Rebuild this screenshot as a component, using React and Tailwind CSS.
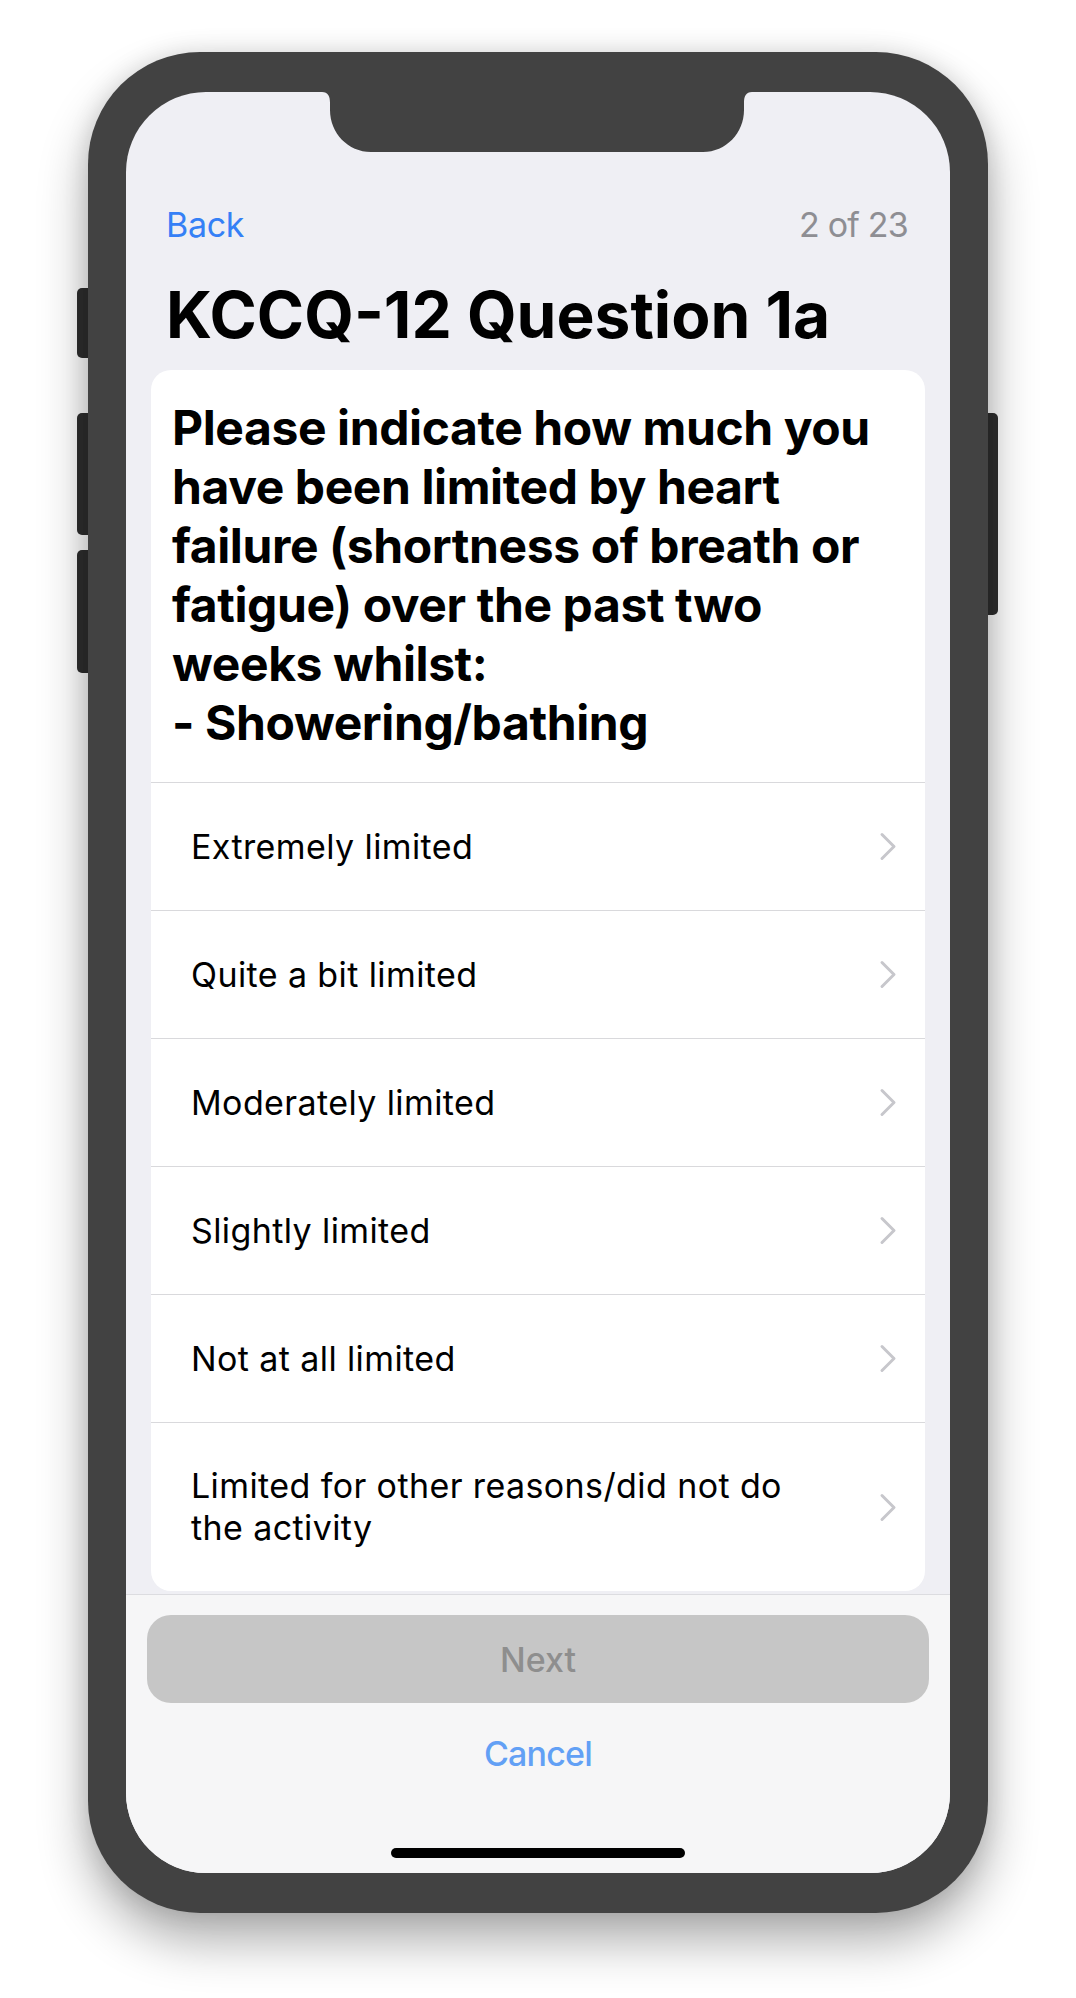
import React from "react";

const options = [
  "Extremely limited",
  "Quite a bit limited",
  "Moderately limited",
  "Slightly limited",
  "Not at all limited",
];

function Chevron() {
  return (
    <svg width="18" height="29" viewBox="0 0 18 29" className="shrink-0">
      <polyline
        points="3,2.5 15,14.5 3,26.5"
        fill="none"
        stroke="#c7c7cc"
        strokeWidth="3"
        strokeLinecap="round"
        strokeLinejoin="round"
      />
    </svg>
  );
}

function Notch() {
  return (
    <svg
      width="430"
      height="60"
      viewBox="0 0 430 60"
      className="absolute left-[196px] top-0"
    >
      <path
        d="M0 0 H430 C424 0 422 4 422 11 V18 C422 41 404 60 381 60 H49 C26 60 8 41 8 18 V11 C8 4 6 0 0 0 Z"
        fill="#424242"
      />
    </svg>
  );
}

export default function App() {
  return (
    <div
      className="w-[1076px] h-[1998px] bg-white overflow-hidden pt-[52px] pl-[88px]"
      style={{ fontFamily: "Inter, 'Liberation Sans', sans-serif" }}
    >
      <div className="relative w-[900px] h-[1861px]">
        {/* side buttons */}
        <div className="absolute left-[-11px] top-[236px] w-[14px] h-[70px] rounded-l-[5px] bg-[#2f2f2f]" />
        <div className="absolute left-[-11px] top-[361px] w-[14px] h-[122px] rounded-l-[5px] bg-[#2f2f2f]" />
        <div className="absolute left-[-11px] top-[498px] w-[14px] h-[123px] rounded-l-[5px] bg-[#2f2f2f]" />
        <div className="absolute right-[-10px] top-[361px] w-[14px] h-[202px] rounded-r-[5px] bg-[#2f2f2f]" />

        <div className="relative w-[900px] h-[1861px] rounded-[112px] bg-[#424242] pt-[40px] px-[38px] shadow-[0_28px_50px_rgba(0,0,0,0.32),0_0_24px_rgba(0,0,0,0.12)]">
          <div className="relative w-[824px] h-[1781px] rounded-[80px] overflow-hidden bg-[#efeff4] flex flex-col">
            <Notch />

            {/* nav */}
            <div className="flex justify-between items-center pl-[40px] pr-[42px] pt-[112px] text-[34px] leading-[41px]">
              <span className="text-[#3580f6] tracking-[-0.3px]">Back</span>
              <span className="text-[#8e8e93] tracking-[-0.8px]">2 of 23</span>
            </div>

            {/* title */}
            <h1 className="mt-[32px] px-[40px] text-[64px] leading-[76px] font-bold text-black tracking-[0px]">
              KCCQ-12 Question 1a
            </h1>

            {/* card */}
            <div className="mt-[17px] mx-[25px] bg-white rounded-[20px] overflow-hidden">
              <div className="pt-[28px] pb-[30px] px-[21px] text-[48px] leading-[59px] font-bold text-black tracking-[-0.4px]">
                Please indicate how much you
                <br />
                have been limited by heart
                <br />
                failure (shortness of breath or
                <br />
                fatigue) over the past two
                <br />
                weeks whilst:
                <br />- Showering/bathing
              </div>
              {options.map((o) => (
                <div
                  key={o}
                  className="h-[128px] border-t border-[#d9d9dc] flex items-center justify-between pl-[40px] pr-[28px]"
                >
                  <span className="text-[34px] leading-[41px] text-black tracking-[0.4px]">
                    {o}
                  </span>
                  <Chevron />
                </div>
              ))}
              <div className="h-[169px] border-t border-[#d9d9dc] flex items-center justify-between pl-[40px] pr-[28px]">
                <span className="w-[660px] text-[34px] leading-[42px] text-black tracking-[0.4px]">
                  Limited for other reasons/did not do
                  <br />
                  the activity
                </span>
                <Chevron />
              </div>
            </div>

            {/* toolbar */}
            <div className="mt-[3px] flex-1 bg-[#f6f6f7] border-t border-[#dcdce0] flex flex-col items-center px-[21px]">
              <div className="mt-[20px] w-full h-[88px] rounded-[24px] bg-[#c6c6c6] flex items-center justify-center text-[34px] font-medium text-[#8e8e8e] tracking-[0px]">
                Next
              </div>
              <div className="mt-[30px] text-[34px] leading-[41px] font-medium text-[#62a0f5] tracking-[-0.8px]">
                Cancel
              </div>
              <div className="mt-[74px] w-[294px] h-[10px] rounded-full bg-black" />
            </div>
          </div>
        </div>
      </div>
    </div>
  );
}
